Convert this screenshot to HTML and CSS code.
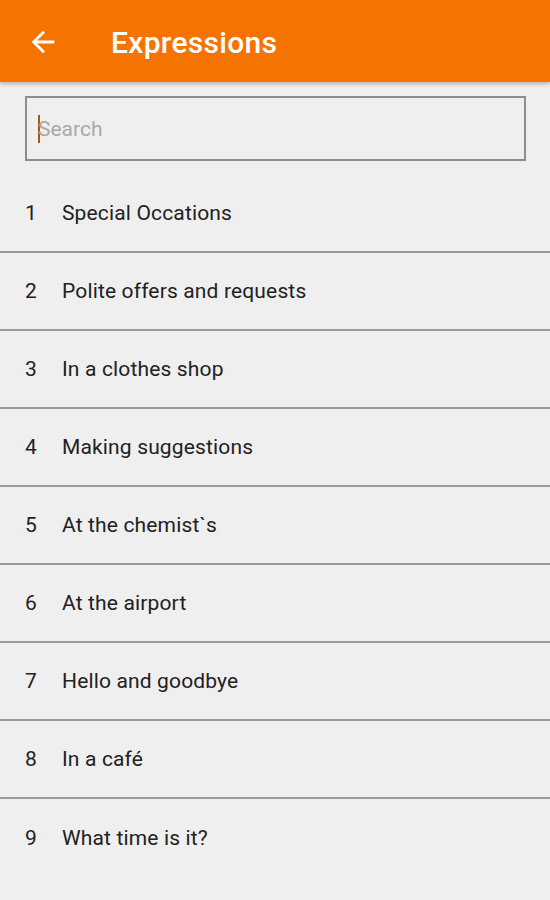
FILE: index.html
```html
<!DOCTYPE html>
<html lang="en">
<head>
    <meta charset="UTF-8">
    <meta name="viewport" content="width=device-width, initial-scale=1.0">
    <title>Expressions</title>
    <link rel="stylesheet" href="styles.css">
</head>
<body>

    <header class="toolbar">
        <button class="back" aria-label="Back">
            <svg viewBox="0 0 24 24">
                <path d="M20 11H7.83l5.59-5.59L12 4l-8 8 8 8 1.41-1.41L7.83 13H20v-2z" fill="#fff"/>
            </svg>
        </button>
        <h1 class="title">Expressions</h1>
    </header>

    <div class="search">
        <span class="caret"></span>
        <span class="placeholder">Search</span>
    </div>

    <ul class="list">
        <li><span class="num">1</span>Special Occations</li>
        <li><span class="num">2</span>Polite offers and requests</li>
        <li><span class="num">3</span>In a clothes shop</li>
        <li><span class="num">4</span>Making suggestions</li>
        <li><span class="num">5</span>At the chemist`s</li>
        <li><span class="num">6</span>At the airport</li>
        <li><span class="num">7</span>Hello and goodbye</li>
        <li><span class="num">8</span>In a café</li>
        <li><span class="num">9</span>What time is it?</li>
    </ul>

</body>
</html>
```

FILE: styles.css
```css
/* Basic Reset */
* {
    margin: 0;
    padding: 0;
    box-sizing: border-box;
    font-family: Roboto, "Liberation Sans", sans-serif;
}

body {
    width: 550px;
    height: 900px;
    background: #efefef;
    overflow: hidden;
}

.toolbar {
    height: 82px;
    background: #f57300;
    display: flex;
    align-items: center;
    box-shadow: 0 2px 4px rgba(0, 0, 0, 0.25);
    position: relative;
}

.back {
    width: 34px;
    height: 34px;
    margin-left: 26px;
    margin-top: 1px;
    border: none;
    background: none;
    display: flex;
}

.back svg {
    width: 34px;
    height: 34px;
}

.title {
    margin-left: 51px;
    margin-top: 2px;
    color: #fff;
    font-size: 30px;
    font-weight: 500;
    letter-spacing: 0.3px;
}

.search {
    margin: 14px 24px 0 25px;
    height: 65px;
    border: 2px solid #8d8d8d;
    display: flex;
    align-items: center;
    padding-left: 11px;
}

.caret {
    width: 2px;
    height: 28px;
    background: #a35a10;
    margin-right: -2px;
}

.placeholder {
    color: #a9a9a9;
    font-size: 21px;
}

.list {
    list-style: none;
    margin-top: 14px;
}

.list li {
    height: 78px;
    display: flex;
    align-items: center;
    padding-left: 25px;
    font-size: 21px;
    letter-spacing: 0.15px;
    color: #212121;
    border-bottom: 2px solid #9a9a9a;
}

.list li:last-child {
    border-bottom: none;
}

.list li span.num {
    width: 37px;
    letter-spacing: 0;
}
```
